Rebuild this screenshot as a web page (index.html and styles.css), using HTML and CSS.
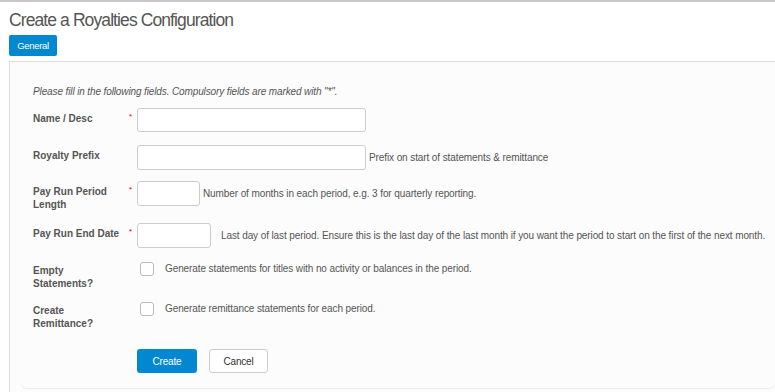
FILE: index.html
```html
<!DOCTYPE html>
<html>
<head>
<meta charset="utf-8">
<link rel="stylesheet" href="styles.css">
</head>
<body>
<div class="page">
  <h1 class="title">Create a Royalties Configuration</h1>
  <div class="tabs"><span class="tab">General</span></div>
  <div class="panel">
    <div class="card">
      <p class="intro">Please fill in the following fields. Compulsory fields are marked with "*".</p>
      <div class="row row-1">
        <div class="label">Name / Desc</div>
        <div class="req">*</div>
        <div class="field"><span class="input input-wide"></span></div>
      </div>
      <div class="row row-2">
        <div class="label">Royalty Prefix</div>
        <div class="req"></div>
        <div class="field"><span class="input input-wide input-tall"></span><span class="help help-tight">Prefix on start of statements &amp; remittance</span></div>
      </div>
      <div class="row row-3">
        <div class="label">Pay Run Period<br>Length</div>
        <div class="req">*</div>
        <div class="field"><span class="input input-small input-tall"></span><span class="help help-tight">Number of months in each period, e.g. 3 for quarterly reporting.</span></div>
      </div>
      <div class="row row-4">
        <div class="label">Pay Run End Date</div>
        <div class="req">*</div>
        <div class="field"><span class="input input-date input-tall"></span><span class="help help-date">Last day of last period. Ensure this is the last day of the last month if you want the period to start on the first of the next month.</span></div>
      </div>
      <div class="row row-5">
        <div class="label">Empty<br>Statements?</div>
        <div class="req"></div>
        <div class="field field-check"><span class="check"></span><span class="help help-check">Generate statements for titles with no activity or balances in the period.</span></div>
      </div>
      <div class="row row-6">
        <div class="label">Create<br>Remittance?</div>
        <div class="req"></div>
        <div class="field field-check"><span class="check"></span><span class="help help-check">Generate remittance statements for each period.</span></div>
      </div>
      <div class="actions">
        <span class="btn btn-primary">Create</span>
        <span class="btn btn-default">Cancel</span>
      </div>
    </div>
  </div>
</div>
</body>
</html>
```
FILE: styles.css
```css
html, body {
  margin: 0;
  padding: 0;
  background: #fff;
  font-family: "Liberation Sans", Arial, sans-serif;
  color: #555;
  overflow: hidden;
}
.page {
  border-top: 2px solid #c8c8c8;
  height: 390px;
  display: flex;
  flex-direction: column;
  padding-left: 9px;
}
.title {
  margin: 8px 0 0 0;
  font-size: 17.5px;
  line-height: 20px;
  font-weight: normal;
  color: #555;
  letter-spacing: -0.9px;
}
.tabs {
  margin-top: 5px;
  display: flex;
}
.tab {
  display: flex;
  align-items: center;
  justify-content: center;
  width: 48px;
  height: 21px;
  background: #0288d1;
  color: #fff;
  font-size: 9.5px;
  border-radius: 2px;
  letter-spacing: -0.3px;
}
.panel {
  margin-top: 5px;
  flex: 1;
  background: #fcfcfc;
  border-top: 1px solid #ddd;
  border-left: 1px solid #ddd;
  padding-left: 11px;
}
.card {
  border-radius: 0 0 6px 6px;
  box-shadow: 0 1px 1px rgba(0, 0, 0, 0.07);
  padding: 24px 0 15px 12px;
}
.intro {
  margin: 0 0 10px 0;
  font-size: 10px;
  line-height: 12px;
  font-style: italic;
  letter-spacing: -0.12px;
  color: #555;
}
.row {
  display: flex;
  align-items: flex-start;
}
.row-1 { height: 37px; }
.row-2 { height: 36px; }
.row-3 { height: 42px; }
.row-4 { height: 39px; }
.row-5 { height: 40px; }
.row-6 { height: 47px; }
.label {
  width: 98px;
  font-size: 10px;
  line-height: 13px;
  font-weight: bold;
  padding-top: 4px;
  color: #555;
}
.row-5 .label, .row-6 .label { padding-top: 2px; }
.req {
  width: 6px;
  color: #e00;
  font-size: 8px;
  line-height: 8px;
  padding-top: 5px;
  margin-left: -2px;
  margin-right: 2px;
}
.field {
  display: flex;
  align-items: center;
}
.input {
  display: block;
  height: 22px;
  border: 1px solid #ccc;
  border-radius: 3px;
  background: #fff;
}
.input-tall { height: 23px; }
.input-wide { width: 227px; }
.input-small { width: 61px; }
.input-date { width: 72px; }
.help {
  font-size: 10px;
  letter-spacing: -0.1px;
  color: #555;
  white-space: nowrap;
}
.help-tight { margin-left: 3px; }
.help-date { margin-left: 10px; }
.field-check { padding-left: 3px; }
.check {
  display: block;
  width: 12px;
  height: 12px;
  border: 1px solid #bbb;
  border-radius: 3px;
  background: #fff;
}
.help-check { margin-left: 11px; margin-top: -1px; }
.actions {
  display: flex;
  gap: 12px;
  padding-left: 104px;
}
.btn {
  display: flex;
  align-items: center;
  justify-content: center;
  height: 24px;
  box-sizing: border-box;
  font-size: 10px;
  border-radius: 3px;
  letter-spacing: -0.2px;
}
.btn-primary {
  width: 60px;
  background: #0288d1;
  color: #fff;
}
.btn-default {
  width: 59px;
  background: #fff;
  border: 1px solid #ccc;
  color: #333;
}
```
